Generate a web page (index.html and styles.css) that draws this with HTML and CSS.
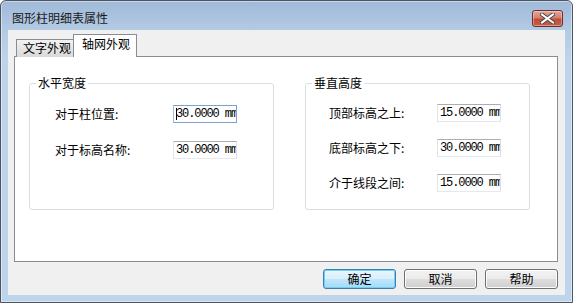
FILE: index.html
```html
<!DOCTYPE html>
<html lang="zh-CN">
<head>
    <meta charset="UTF-8">
    <title>图形柱明细表属性</title>
    <link rel="stylesheet" href="styles.css">
</head>
<body>

<div class="window">
    <!-- Title bar -->
    <div class="titlebar">
        <span class="title">图形柱明细表属性</span>
        <div class="close">
            <svg width="15" height="11" viewBox="0 0 15 11">
                <path d="M2 1.5 L13 9.5 M13 1.5 L2 9.5" stroke="#4a4a4a" stroke-width="4" stroke-linecap="square"/>
                <path d="M2 1.5 L13 9.5 M13 1.5 L2 9.5" stroke="#ffffff" stroke-width="2" stroke-linecap="square"/>
            </svg>
        </div>
    </div>

    <div class="client">
        <!-- Tabs -->
        <div class="tabs">
            <div class="tab">文字外观</div>
            <div class="tab active">轴网外观</div>
        </div>

        <div class="panel">
            <fieldset class="group group-h">
                <legend>水平宽度</legend>
                <div class="rows">
                    <label>对于柱位置:</label>
                    <div class="field focused"><span class="caret"></span>30.0000 mm</div>
                    <label>对于标高名称:</label>
                    <div class="field">30.0000 mm</div>
                </div>
            </fieldset>

            <fieldset class="group group-v">
                <legend>垂直高度</legend>
                <div class="rows">
                    <label>顶部标高之上:</label>
                    <div class="field">15.0000 mm</div>
                    <label>底部标高之下:</label>
                    <div class="field">30.0000 mm</div>
                    <label>介于线段之间:</label>
                    <div class="field">15.0000 mm</div>
                </div>
            </fieldset>
        </div>

        <!-- Dialog buttons -->
        <div class="buttons">
            <div class="btn default">确定</div>
            <div class="btn">取消</div>
            <div class="btn">帮助</div>
        </div>
    </div>
</div>

</body>
</html>
```

FILE: styles.css
```css
body {
    margin: 0;
    padding: 0;
    width: 573px;
    height: 303px;
    overflow: hidden;
    font-family: "Noto Sans CJK SC", "DejaVu Sans", sans-serif;
    font-size: 12px;
    color: #000;
    background: #fff;
}
.window {
    box-sizing: border-box;
    width: 573px;
    height: 303px;
    border: 1px solid #4d5560;
    border-radius: 6px 6px 0 0;
    background: linear-gradient(#9fb9d8 0px, #b4cbe4 30px, #bdd4eb 60px, #bdd4eb 100%);
    box-shadow: inset 0 0 0 1px rgba(255, 255, 255, 0.45);
    display: flex;
    flex-direction: column;
}
/* Title bar */
.titlebar {
    height: 29px;
    display: flex;
    align-items: flex-start;
    justify-content: space-between;
}
.title {
    margin: 9px 0 0 11px;
    line-height: 16px;
    font-size: 12px;
    color: #1a1a1a;
}
.close {
    width: 29px;
    height: 15px;
    margin: 9px 9px 0 0;
    border: 1px solid #6e2f29;
    border-radius: 3px;
    background: linear-gradient(#e2a79c 0%, #d4806f 45%, #c24b37 55%, #c8604a 100%);
    box-shadow: inset 0 0 0 1px rgba(255, 255, 255, 0.35);
    display: flex;
    align-items: center;
    justify-content: center;
}
/* Client area */
.client {
    margin: 0 7px 7px 7px;
    flex: 1;
    background-color: #f0f0f0;
    display: flex;
    flex-direction: column;
}
.tabs {
    height: 22px;
    padding: 4px 0 0 8px;
    display: flex;
    align-items: flex-end;
    position: relative;
    z-index: 1;
}
.tab {
    box-sizing: border-box;
    height: 18px;
    width: 58px;
    padding-left: 6px;
    line-height: 16px;
    border: 1px solid #898c95;
    border-bottom: none;
    background: linear-gradient(#f2f2f2, #e6e6e6 50%, #d9d9d9);
    margin-bottom: -1px;
}
.tab.active {
    height: 23px;
    width: 64px;
    padding-left: 8px;
    line-height: 18px;
    background: #fff;
    margin-left: -1px;
}
.panel {
    box-sizing: border-box;
    height: 206px;
    margin: 0 7px 0 6px;
    border: 1px solid #898c95;
    background: #fff;
    padding: 18px 0 0 14px;
    display: flex;
    align-items: flex-start;
}
/* Group boxes */
.group {
    box-sizing: border-box;
    height: 135px;
    margin: 0;
    padding: 0;
    border: 1px solid #d5dfe5;
    border-radius: 3px;
}
.group legend {
    margin-left: 6px;
    padding: 0 2px;
    line-height: 16px;
}
.group-h {
    width: 245px;
}
.group-v {
    width: 225px;
    margin-left: 31px;
}
.rows {
    display: grid;
    grid-template-columns: 118px 64px;
    align-items: center;
    padding-left: 25px;
    margin-top: 14px;
    row-gap: 18px;
}
.group-v .rows {
    grid-template-columns: 108px 64px;
    padding-left: 23px;
    margin-top: 13px;
    row-gap: 17px;
}
.rows label {
    line-height: 16px;
}
.field {
    box-sizing: border-box;
    height: 18px;
    width: 64px;
    border: 1px solid #abadb3;
    border-left-color: #e2e3ea;
    border-right-color: #dbdfe6;
    border-bottom-color: #e3e9ef;
    padding-left: 2px;
    font-family: "Liberation Mono", "DejaVu Sans Mono", monospace;
    font-size: 12px;
    letter-spacing: -1.1px;
    line-height: 16px;
    white-space: nowrap;
    overflow: hidden;
    position: relative;
}
.field.focused {
    border-color: #7da2ce;
    border-left-color: #a4c0e0;
}
.caret {
    position: absolute;
    left: 2px;
    top: 2px;
    width: 1px;
    height: 12px;
    background: #000;
}
/* Buttons */
.buttons {
    display: flex;
    justify-content: flex-end;
    gap: 8px;
    padding: 7px 7px 0 0;
}
.btn {
    box-sizing: border-box;
    width: 73px;
    height: 20px;
    border: 1px solid #707070;
    border-radius: 3px;
    background: linear-gradient(#f2f2f2 0%, #ebebeb 48%, #dddddd 52%, #cfcfcf 100%);
    box-shadow: inset 0 0 0 1px #fcfcfc;
    text-align: center;
    line-height: 17px;
}
.btn.default {
    border-color: #3c7fb1;
    background: linear-gradient(#eaf6fd 0%, #d9f0fc 48%, #bee6fd 52%, #a7d9f5 100%);
    box-shadow: inset 0 0 0 1px #6cd2f2;
}
```
